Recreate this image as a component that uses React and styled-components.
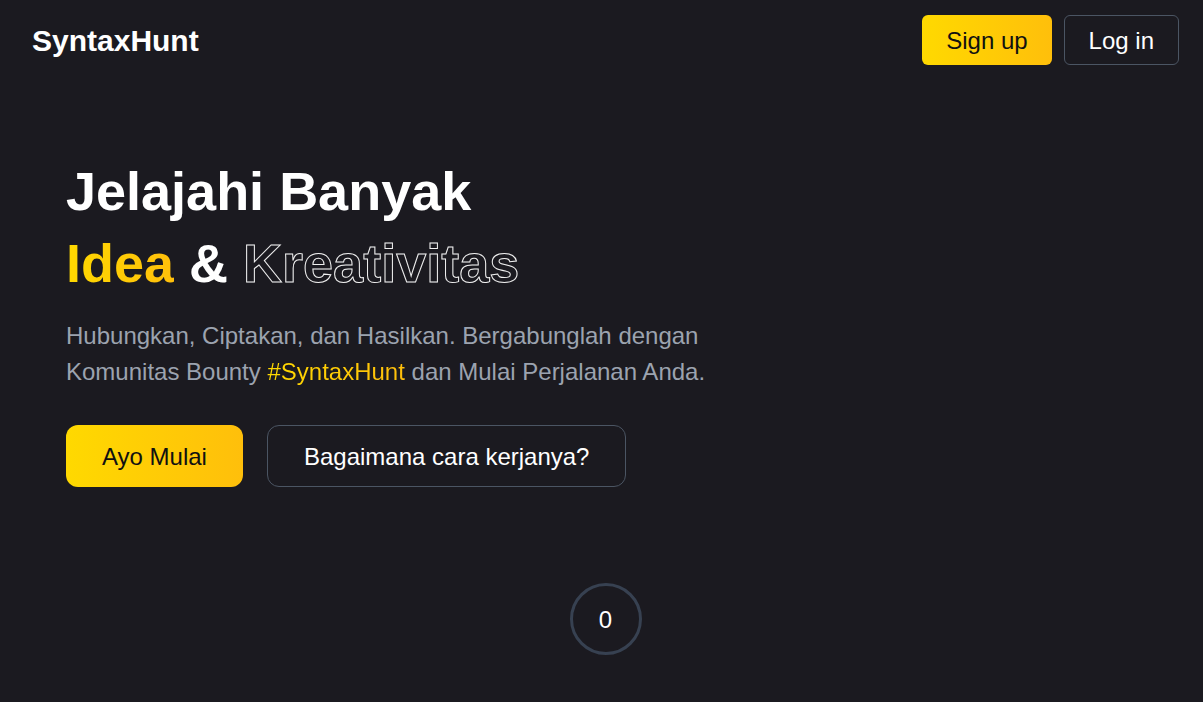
import React from 'react';
import styled, { createGlobalStyle, css } from 'styled-components';

const GlobalStyle = createGlobalStyle`
  *, *::before, *::after { box-sizing: border-box; }
  body {
    margin: 0;
    background: #1b1a20;
    color: #ffffff;
    font-family: Arial, "Liberation Sans", sans-serif;
  }
`;

const gradient = 'linear-gradient(90deg, #ffd900, #ffbf0b)';

const Page = styled.div`
  min-height: 100vh;
  display: flex;
  flex-direction: column;
`;

const Header = styled.header`
  display: flex;
  align-items: center;
  justify-content: space-between;
  padding: 15px 24px 15px 32px;
`;

const Brand = styled.a`
  padding-top: 2px;
  color: #ffffff;
  font-size: 30px;
  line-height: 36px;
  font-weight: 700;
  text-decoration: none;
`;

const Actions = styled.div`
  display: flex;
  flex-wrap: wrap;
  gap: ${({ $gap }) => $gap}px;
`;

const Button = styled.button`
  font: inherit;
  font-size: 24px;
  line-height: 36px;
  cursor: pointer;
  border-radius: ${({ $large }) => ($large ? 12 : 6)}px;
  padding: ${({ $large }) => ($large ? '13px 36px 11px' : '7px 24px 5px')};
  ${({ $primary }) =>
    $primary
      ? css`
          border: solid transparent;
          border-width: 1px 0;
          background: ${gradient} border-box;
          color: #111111;
        `
      : css`
          border: 1px solid #4b5563;
          background: transparent;
          color: #ffffff;
        `}
`;

const Hero = styled.main`
  padding: 75px 66px 0;
`;

const Title = styled.h1`
  margin: 0;
  font-size: 54px;
  line-height: 72px;
  font-weight: 700;
`;

const GradientText = styled.span`
  background: ${gradient};
  background-clip: text;
  -webkit-background-clip: text;
  color: transparent;
`;

const OutlineText = styled.span`
  color: transparent;
  -webkit-text-stroke: 1px #f0f0f0;
`;

const Lead = styled.p`
  margin: 19px 0 35px;
  max-width: 660px;
  font-size: 24px;
  line-height: 36px;
  color: #9ca3af;
`;

const Stats = styled.section`
  display: flex;
  justify-content: center;
  padding: 96px 24px 32px 32px;
`;

const Counter = styled.output`
  display: flex;
  align-items: center;
  justify-content: center;
  width: 72px;
  height: 72px;
  padding-top: 2px;
  border: 3px solid #374151;
  border-radius: 50%;
  font-size: 24px;
  line-height: 36px;
`;

export default function App() {
  return (
    <Page>
      <GlobalStyle />
      <Header>
        <Brand href="#">SyntaxHunt</Brand>
        <Actions $gap={12}>
          <Button type="button" $primary>Sign up</Button>
          <Button type="button">Log in</Button>
        </Actions>
      </Header>
      <Hero>
        <Title>
          Jelajahi Banyak
          <br />
          <GradientText>Idea</GradientText> &amp; <OutlineText>Kreativitas</OutlineText>
        </Title>
        <Lead>
          Hubungkan, Ciptakan, dan Hasilkan. Bergabunglah dengan Komunitas Bounty{' '}
          <GradientText>#SyntaxHunt</GradientText> dan Mulai Perjalanan Anda.
        </Lead>
        <Actions $gap={24}>
          <Button type="button" $primary $large>Ayo Mulai</Button>
          <Button type="button" $large>Bagaimana cara kerjanya?</Button>
        </Actions>
      </Hero>
      <Stats>
        <Counter>0</Counter>
      </Stats>
    </Page>
  );
}
